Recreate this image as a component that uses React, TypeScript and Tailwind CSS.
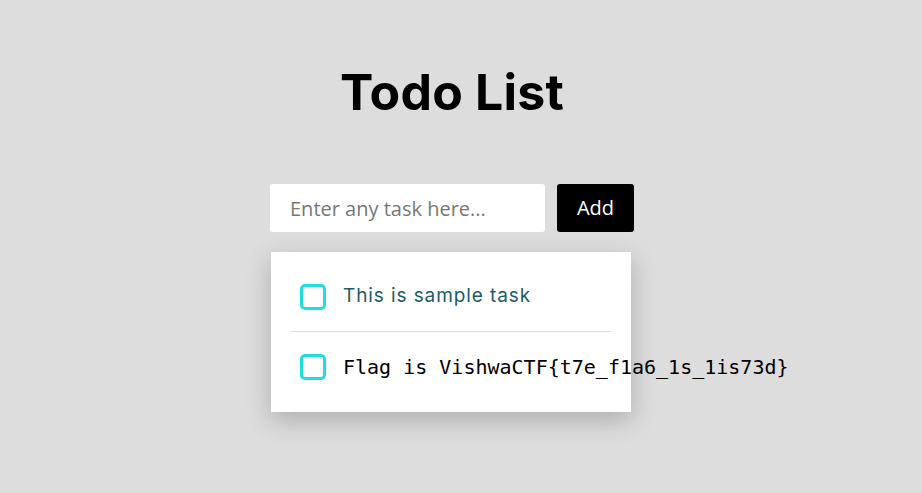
import React from "react"

const tasks = [
  { text: "This is sample task", mono: false },
  { text: "Flag is VishwaCTF{t7e_f1a6_1s_1is73d}", mono: true },
]

export default function App() {
  return (
    <div className="min-h-screen w-full bg-[#dddddd] flex flex-col items-center pr-5 font-['Open_Sans',sans-serif]">
      <h1 className="mt-[60px] text-[50px] leading-[64px] font-bold tracking-[0.2px] text-black font-['Inter',sans-serif] ml-[2px]">
        Todo List
      </h1>

      <div className="mt-[60px] flex gap-3 ml-[2px]">
        <input
          type="text"
          placeholder="Enter any task here..."
          className="w-[275px] h-12 bg-white rounded-[3px] px-5 text-[20px] text-gray-700 placeholder:text-[#777777] outline-none"
        />
        <button className="w-[77px] h-12 bg-black text-white text-[20px] rounded-[3px]">
          Add
        </button>
      </div>

      <div className="mt-5 w-[360px] bg-white px-5 py-[10px] shadow-[0_8px_24px_rgba(0,0,0,0.22)]">
        {tasks.map((t, i) => (
          <div
            key={i}
            className={
              "h-[70px] flex items-center pl-[9px] gap-[17px] " +
              (i === 0 ? "border-b border-[#dcdcdc]" : "")
            }
          >
            <span className="w-[26px] h-[26px] shrink-0 rounded-[5px] border-[3px] border-[#22dde0] bg-white" />
            <span
              className={
                t.mono
                  ? "whitespace-nowrap text-[20px] text-black font-['DejaVu_Sans_Mono',monospace]"
                  : "whitespace-nowrap text-[19px] tracking-[0.9px] text-[#1e5a66] font-['Inter',sans-serif]"
              }
            >
              {t.text}
            </span>
          </div>
        ))}
      </div>
    </div>
  )
}
